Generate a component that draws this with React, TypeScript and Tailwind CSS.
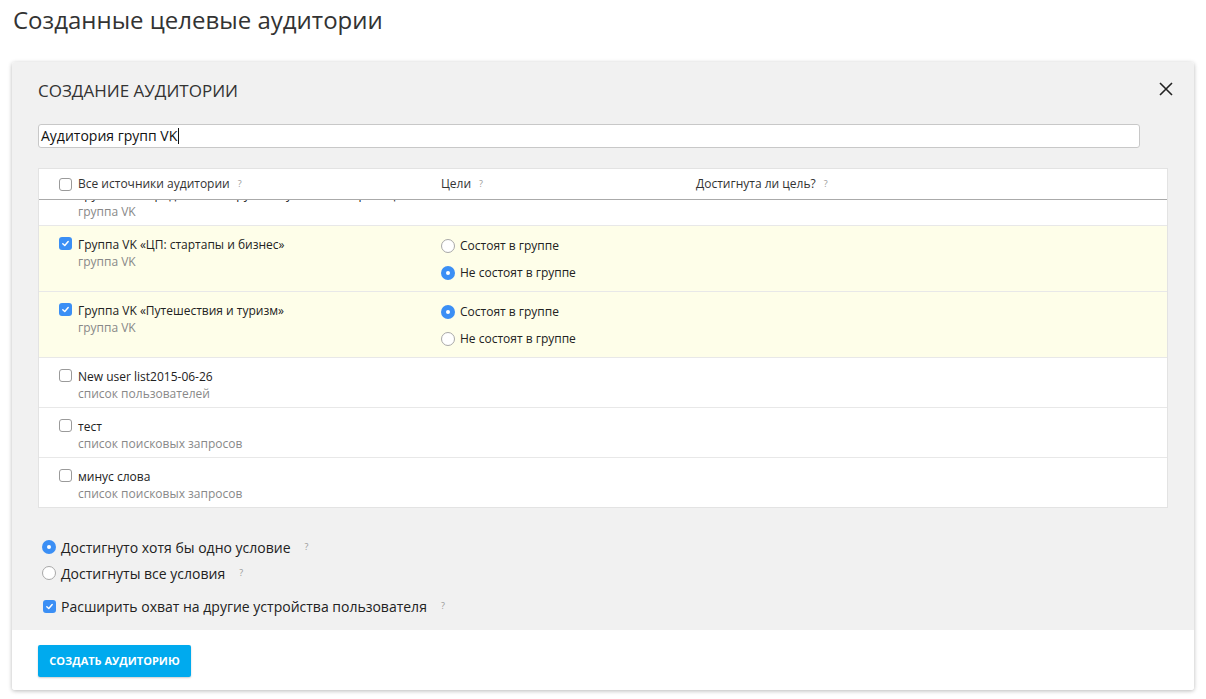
import React from 'react';

// Audience builder – "Создание аудитории" modal

interface Source {
  id: string;
  title: string;
  kind: string;
  checked: boolean;
  goals?: { label: string; selected: boolean }[];
}

const sources: Source[] = [
  { id: 's1', title: 'Группа VK «Продвижение групп и публичных страниц»', kind: 'группа VK', checked: false },
  {
    id: 's2',
    title: 'Группа VK «ЦП: стартапы и бизнес»',
    kind: 'группа VK',
    checked: true,
    goals: [
      { label: 'Состоят в группе', selected: false },
      { label: 'Не состоят в группе', selected: true },
    ],
  },
  {
    id: 's3',
    title: 'Группа VK «Путешествия и туризм»',
    kind: 'группа VK',
    checked: true,
    goals: [
      { label: 'Состоят в группе', selected: true },
      { label: 'Не состоят в группе', selected: false },
    ],
  },
  { id: 's4', title: 'New user list2015-06-26', kind: 'список пользователей', checked: false },
  { id: 's5', title: 'тест', kind: 'список поисковых запросов', checked: false },
  { id: 's6', title: 'минус слова', kind: 'список поисковых запросов', checked: false },
];

const Checkbox: React.FC<{ checked: boolean }> = ({ checked }) =>
  checked ? (
    <span className="w-[13px] h-[13px] rounded-[3px] bg-[#3b8ff5] flex items-center justify-center shrink-0">
      <svg width="9" height="9" viewBox="0 0 10 10">
        <path d="M2 5.2 L4.2 7.3 L8 2.8" fill="none" stroke="#fff" strokeWidth="1.6" strokeLinecap="round" strokeLinejoin="round" />
      </svg>
    </span>
  ) : (
    <span className="block w-[13px] h-[13px] rounded-[3px] bg-white border border-[#9a9a9a] shrink-0" />
  );

const Radio: React.FC<{ checked: boolean }> = ({ checked }) =>
  checked ? (
    <span className="w-[14px] h-[14px] rounded-full bg-[#3b8ff5] flex items-center justify-center shrink-0">
      <span className="block w-[4px] h-[4px] rounded-full bg-white" />
    </span>
  ) : (
    <span className="block w-[14px] h-[14px] rounded-full bg-white border border-[#a8a8a8] shrink-0" />
  );

const Hint: React.FC<{ className?: string }> = ({ className }) => (
  <span className={'text-[9px] text-[#999] ' + (className || '')}>?</span>
);

export default function App() {
  return (
    <div
      className="min-h-[699px] bg-white text-[#333]"
      style={{ fontFamily: '"Open Sans", "Noto Sans", sans-serif' }}
    >
      <h1 className="px-[13px] pt-[4px] text-[24px] leading-[32px] text-[#333]">Созданные целевые аудитории</h1>

      <div className="mx-[12px] mt-[26px] w-[1182px] rounded-[3px] shadow-[0_1px_4px_rgba(0,0,0,0.28)] overflow-hidden">
        <div className="bg-[#f1f1f1] px-[26px] pt-[17px] pb-[14px]">
          {/* Header */}
          <div className="flex items-center justify-between h-[24px]">
            <h2 className="text-[17px] leading-[24px] text-[#333]">СОЗДАНИЕ АУДИТОРИИ</h2>
            <svg width="14" height="14" viewBox="0 0 14 14" className="mr-[-5px] mt-[-4px]">
              <path d="M1 1 L13 13 M13 1 L1 13" stroke="#222" strokeWidth="1.6" />
            </svg>
          </div>

          {/* Name input */}
          <div className="mt-[21px] w-[1102px] h-[24px] bg-white border border-[#c8c8c8] rounded-[3px] flex items-center px-[2px]">
            <span className="text-[14px] leading-[20px] text-[#111]">Аудитория групп VK</span>
            <span className="w-px h-[16px] bg-[#111] ml-[1px]" />
          </div>

          {/* Sources table */}
          <div className="mt-[20px] bg-white border border-[#e3e3e3]">
            <div className="flex items-center h-[31px] border-b border-[#aaa] text-[12px]">
              <div className="w-[402px] pl-[20px] flex items-center gap-[6px]">
                <Checkbox checked={false} />
                <span>Все источники аудитории</span>
                <Hint className="ml-[2px]" />
              </div>
              <div className="w-[255px] flex items-center gap-[8px]">
                <span>Цели</span>
                <Hint />
              </div>
              <div className="flex items-center gap-[8px]">
                <span>Достигнута ли цель?</span>
                <Hint />
              </div>
            </div>

            <div className="h-[307px] overflow-hidden">
              <div className="-mt-[24px]">
                {sources.map((s) => (
                  <div
                    key={s.id}
                    className={
                      'flex border-b border-[#e8e8e8] last:border-b-0 ' + (s.checked ? 'bg-[#fefee9]' : 'bg-white')
                    }
                  >
                    <div className="w-[402px] pl-[20px] pt-[10px] pb-[5px] flex gap-[6px]">
                      <div className="pt-[1px]">
                        <Checkbox checked={s.checked} />
                      </div>
                      <div className="text-[12px] leading-[17px]">
                        <div className="text-[#222] whitespace-nowrap">{s.title}</div>
                        <div className="text-[#888]">{s.kind}</div>
                      </div>
                    </div>
                    {s.goals && (
                      <div className="pt-[10px] pb-[8px] flex flex-col gap-[7px]">
                        {s.goals.map((g) => (
                          <label key={g.label} className="h-[20px] flex items-center gap-[5px] text-[12px]">
                            <Radio checked={g.selected} />
                            <span className="text-[#222]">{g.label}</span>
                          </label>
                        ))}
                      </div>
                    )}
                  </div>
                ))}
              </div>
            </div>
          </div>

          {/* Conditions */}
          <div className="mt-[29px] pl-[4px] text-[14px] text-[#222]">
            <div className="flex items-center h-[20px] gap-[5px]">
              <Radio checked />
              <span>Достигнуто хотя бы одно условие</span>
              <Hint className="ml-[9px]" />
            </div>
            <div className="flex items-center h-[20px] gap-[5px] mt-[6px]">
              <Radio checked={false} />
              <span>Достигнуты все условия</span>
              <Hint className="ml-[9px]" />
            </div>
            <div className="flex items-center h-[20px] gap-[5px] mt-[13px] pl-[1px]">
              <Checkbox checked />
              <span>Расширить охват на другие устройства пользователя</span>
              <Hint className="ml-[9px]" />
            </div>
          </div>
        </div>

        {/* Footer */}
        <div className="bg-white px-[26px] pt-[15px] pb-[13px]">
          <button className="h-[32px] w-[153px] rounded-[2px] bg-[#00aaee] text-white text-[11px] font-bold shadow-[0_1px_2px_rgba(0,0,0,0.2)]">
            СОЗДАТЬ АУДИТОРИЮ
          </button>
        </div>
      </div>
    </div>
  );
}
